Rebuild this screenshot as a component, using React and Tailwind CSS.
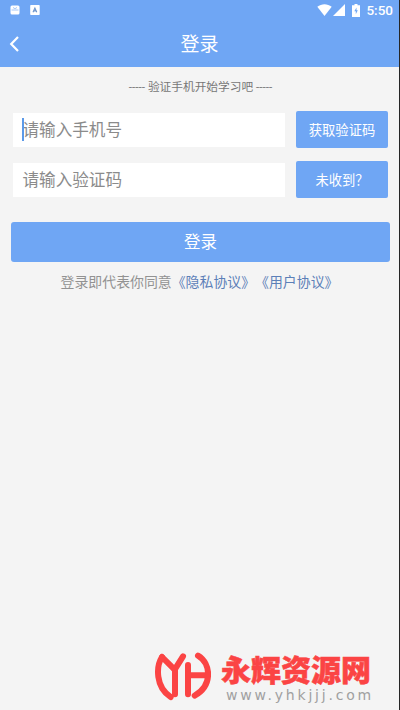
const cjk = "font-['Roboto','Noto_Sans_CJK_SC',sans-serif]"

function StatusBar() {
  return (
    <div className="h-5 pl-2.5 pr-[6px] flex items-center justify-between">
      <div className="flex items-center gap-[10px]">
        <svg width="10" height="10" viewBox="0 0 10 10">
          <rect x="0.5" y="0.5" width="9" height="9" rx="1.5" fill="#fff" />
          <path d="M1.500 5h7M3 2.500l2 1.200 2-1.200" stroke="#8fb9f5" strokeWidth="0.8" fill="none" />
        </svg>
        <svg width="10" height="10" viewBox="0 0 10 10">
          <rect x="0.2" width="9.5" height="10" rx="0.8" fill="#fff" />
          <path d="M3 7.300L4.900 3l1.900 4.300M3.600 5.900h2.600" stroke="#6b93ca" strokeWidth="1.1" fill="none" />
        </svg>
      </div>
      <div className="flex items-center text-white">
        <svg width="15" height="12" viewBox="0 0 15 12" fill="currentColor">
          <path d="M0.300 2.800C4.500-.7 10.500-.7 14.700 2.800L7.500 12Z" />
        </svg>
        <svg className="ml-px" width="12" height="12" viewBox="0 0 12 12" fill="currentColor">
          <path d="M12 0V12H0Z" />
        </svg>
        <svg className="ml-[7px]" width="8" height="13" viewBox="0 0 8 13">
          <path d="M2.500 0h3v1.300H8V13H0V1.300h2.500Z" fill="#fff" />
          <path d="M4.500 3.500L2.300 7.300h1.500v3l2-4H4.500Z" fill="#6fa6f4" />
        </svg>
        <span className="ml-[6px] text-[13.500px] leading-5 font-medium">5:50</span>
      </div>
    </div>
  )
}

function Field({ placeholder, action, focused }) {
  return (
    <div className="flex items-center h-[37px] pl-[13px] pr-[11px]">
      <div className="relative w-[272px] h-[34px] bg-white pl-[9.500px] pt-[3px] flex items-center text-[16.600px] text-[#8b8b8b]">
        {focused && <span className="absolute left-[9px] top-[5px] w-[1.500px] h-[23px] bg-[#5c9ae8]" />}
        {placeholder}
      </div>
      <button className="ml-[11px] w-[92px] h-[37px] pt-[2px] rounded-[2px] bg-[#6fa6f4] text-white text-[13.300px]">{action}</button>
    </div>
  )
}

function Watermark() {
  return (
    <div className="mt-auto mb-[8px] h-[50px] pl-[154px] flex items-start">
      <svg className="shrink-0" width="57" height="49" viewBox="40 35 171 147" fill="none" stroke="#fb4444" strokeWidth="18" strokeLinecap="round">
        <path d="M64 50C46 78 44 140 90 170" />
        <path d="M64 50L102 88L127 48M103 88V162" />
        <path d="M142 74V162M142 105H198" />
        <path d="M172 46C212 70 216 136 162 166" />
      </svg>
      <div className="ml-[10px] pt-px">
        <div className="h-[34px] text-[30px] leading-[35px] font-black text-[#fb4444] whitespace-nowrap [-webkit-text-stroke:0.5px_#fb4444]">永辉资源网</div>
        <div className="pl-[5px] font-['DejaVu_Sans',sans-serif] text-[14px] leading-[16px] tracking-[2.800px] text-[#a0a0a0] whitespace-nowrap">www.yhkjjj.com</div>
      </div>
    </div>
  )
}

export default function App() {
  return (
    <div className={`w-[400px] h-[710px] overflow-hidden bg-[#f4f4f4] border-r border-[#252525] flex flex-col ${cjk}`}>
      <header className="h-[67px] shrink-0 bg-[#6fa6f4] text-white">
        <StatusBar />
        <div className="h-[47px] grid grid-cols-[60px_1fr_60px] items-center">
          <svg className="ml-[9px]" width="11" height="16" viewBox="0 0 11 16" fill="none" stroke="currentColor" strokeWidth="2.200">
            <path d="M9 1L2.200 8L9 15" />
          </svg>
          <h1 className="pt-[4px] text-center text-[19px]">登录</h1>
        </div>
      </header>

      <p className="mt-[10px] h-5 pl-[2px] leading-[21px] text-center text-[11.700px] text-[#777]">----- 验证手机开始学习吧 -----</p>

      <div className="mt-[14px] flex flex-col gap-[13px]">
        <Field placeholder="请输入手机号" action="获取验证码" focused />
        <Field placeholder="请输入验证码" action="未收到？" />
      </div>

      <button className="mt-[24px] ml-[11px] w-[379px] h-10 pt-[3px] shrink-0 rounded-[3px] bg-[#6fa6f4] text-white text-[16.500px]">登录</button>

      <p className="mt-[10px] h-5 leading-5 text-center text-[13.900px] text-[#929292] whitespace-nowrap [text-spacing-trim:space-all]">
        登录即代表你同意<span className="text-[#5c80b8]">《隐私协议》《用户协议》</span>
      </p>

      <Watermark />
    </div>
  )
}
